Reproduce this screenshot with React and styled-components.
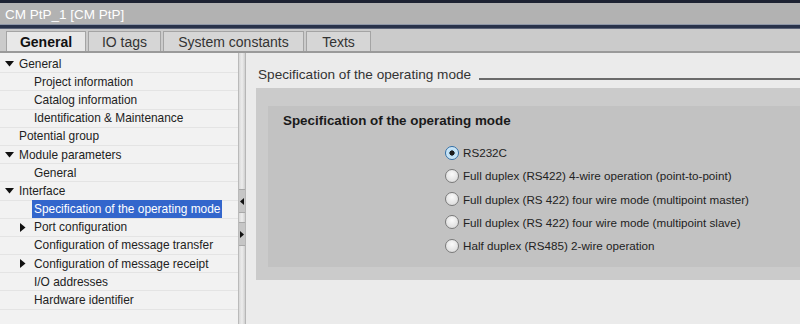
import styled, { createGlobalStyle } from "styled-components";

const GlobalStyle = createGlobalStyle`
  html, body {
    margin: 0;
    padding: 0;
    width: 800px;
    height: 324px;
    overflow: hidden;
    background: #ebebeb;
    font-family: "Liberation Sans", "DejaVu Sans", sans-serif;
  }
`;

const Window = styled.div`
  width: 800px;
  height: 324px;
  display: flex;
  flex-direction: column;
  background: #ebebeb;
`;

const TitleBar = styled.div`
  height: 22px;
  border-top: 3px solid #1d2232;
  border-bottom: 3px solid #28324a;
  box-shadow: inset 0 -1px 0 #8d95a6;
  background: #b2b2b2;
  color: #fff;
  font-size: 13.5px;
  display: flex;
  align-items: center;
  padding-left: 5px;
`;

const TabBar = styled.div`
  height: 22px;
  background: #cbcbcb;
  border-top: 1px solid #5c6478;
  border-bottom: 2px solid #9a9a9a;
  display: flex;
  align-items: flex-end;
  gap: 2px;
  padding-left: 6px;
`;

const Tab = styled.div`
  width: ${(p) => p.$w}px;
  height: 20px;
  box-sizing: border-box;
  display: flex;
  align-items: center;
  justify-content: center;
  font-size: 14px;
  font-weight: ${(p) => (p.$active ? 700 : 400)};
  color: ${(p) => (p.$active ? "#111" : "#333")};
  background: ${(p) => (p.$active ? "#e8e8e8" : "#d6d6d6")};
  border: 1px solid #a4a4a4;
  border-bottom: none;
`;

const Body = styled.div`
  flex: 1;
  display: flex;
  min-height: 0;
`;

const Tree = styled.div`
  width: 238px;
  background: #f2f2f2;
  padding-top: 2px;
`;

const Row = styled.div`
  height: 18.2px;
  box-sizing: border-box;
  border-bottom: 1px solid #e4e4e4;
  display: flex;
  align-items: center;
  padding-left: ${(p) => p.$indent}px;
  font-size: 11.9px;
  color: #222;
`;

const Caret = styled.span`
  width: 14px;
  display: flex;
  align-items: center;
  flex-shrink: 0;
`;

const Label = styled.span`
  padding: 2px 2px;
  margin-left: -2px;
  background: ${(p) => (p.$selected ? "#3366cc" : "transparent")};
  color: ${(p) => (p.$selected ? "#fff" : "#222")};
`;

const Splitter = styled.div`
  width: 8px;
  background: linear-gradient(90deg, #9c9c9c 0, #d8d8d8 1px, #ededed 4px, #d0d0d0 7px, #9c9c9c 8px);
  display: flex;
  flex-direction: column;
  align-items: center;
  padding-top: 136px;
  gap: 9px;
`;

const SplitButton = styled.div`
  width: 6px;
  height: 22px;
  background: #c6c6c6;
  border-top: 1px solid #a8a8a8;
  border-bottom: 1px solid #a8a8a8;
  display: flex;
  align-items: center;
  justify-content: center;
`;

const Content = styled.div`
  flex: 1;
  padding: 12px 0 0 10px;
`;

const SectionHead = styled.div`
  display: flex;
  align-items: center;
  gap: 8px;
  font-size: 13.6px;
  color: #333;
  padding-left: 2px;
  height: 18px;
`;

const HeadRule = styled.div`
  flex: 1;
  height: 2px;
  background: #6a6a6a;
  margin-top: 10px;
`;

const OuterPanel = styled.div`
  margin-top: 5px;
  background: #cbcbcb;
  padding: 18px 0 13px 12px;
`;

const InnerPanel = styled.div`
  background: #c2c2c2;
  padding: 5px 0 0 15px;
  height: 161px;
  box-sizing: border-box;
`;

const PanelTitle = styled.div`
  font-size: 13.4px;
  font-weight: 700;
  color: #1a1a1a;
  height: 18px;
  display: flex;
  align-items: center;
`;

const Options = styled.div`
  display: flex;
  flex-direction: column;
  gap: 9.3px;
  padding: 16.5px 0 0 163px;
`;

const Option = styled.label`
  display: flex;
  align-items: center;
  gap: 4px;
  height: 14px;
  font-size: 11.65px;
  color: #222;
`;

const Radio = styled.span`
  width: 12px;
  height: 12px;
  border-radius: 50%;
  border: 1px solid ${(p) => (p.$checked ? "#2f6fa8" : "#7a7a7a")};
  background: ${(p) =>
    p.$checked
      ? "radial-gradient(circle, #1b1b1b 0 2.3px, #b7dcf4 2.9px, #eaf5fc 100%)"
      : "radial-gradient(circle at 50% 35%, #fafafa, #d6d6d6)"};
  display: inline-block;
  flex-shrink: 0;
  margin-left: -1px;
`;

function CaretIcon({ open }) {
  return open ? (
    <svg width="9" height="6" viewBox="0 0 9 6">
      <path d="M0 0 L9 0 L4.5 5.5 Z" fill="#111" />
    </svg>
  ) : (
    <svg width="6" height="9" viewBox="0 0 6 9">
      <path d="M0 0 L5.5 4.5 L0 9 Z" fill="#111" />
    </svg>
  );
}

const tree = [
  { t: "General", indent: 5, caret: "open" },
  { t: "Project information", indent: 34 },
  { t: "Catalog information", indent: 34 },
  { t: "Identification & Maintenance", indent: 34 },
  { t: "Potential group", indent: 19 },
  { t: "Module parameters", indent: 5, caret: "open" },
  { t: "General", indent: 34 },
  { t: "Interface", indent: 5, caret: "open" },
  { t: "Specification of the operating mode", indent: 34, selected: true },
  { t: "Port configuration", indent: 20, caret: "closed" },
  { t: "Configuration of message transfer", indent: 34 },
  { t: "Configuration of message receipt", indent: 20, caret: "closed" },
  { t: "I/O addresses", indent: 34 },
  { t: "Hardware identifier", indent: 34 },
];

const options = [
  "RS232C",
  "Full duplex (RS422) 4-wire operation (point-to-point)",
  "Full duplex (RS 422) four wire mode (multipoint master)",
  "Full duplex (RS 422) four wire mode (multipoint slave)",
  "Half duplex (RS485) 2-wire operation",
];

export default function App() {
  return (
    <Window>
      <GlobalStyle />
      <TitleBar>CM PtP_1 [CM PtP]</TitleBar>
      <TabBar>
        <Tab $active $w={80}>General</Tab>
        <Tab $w={73}>IO tags</Tab>
        <Tab $w={141}>System constants</Tab>
        <Tab $w={65}>Texts</Tab>
      </TabBar>
      <Body>
        <Tree>
          {tree.map((r, i) => (
            <Row key={i} $indent={r.indent}>
              {r.caret && (
                <Caret>
                  <CaretIcon open={r.caret === "open"} />
                </Caret>
              )}
              <Label $selected={r.selected}>{r.t}</Label>
            </Row>
          ))}
        </Tree>
        <Splitter>
          <SplitButton>
            <svg width="4" height="7" viewBox="0 0 4 7">
              <path d="M4 0 L0 3.5 L4 7 Z" fill="#111" />
            </svg>
          </SplitButton>
          <SplitButton>
            <svg width="4" height="7" viewBox="0 0 4 7">
              <path d="M0 0 L4 3.5 L0 7 Z" fill="#111" />
            </svg>
          </SplitButton>
        </Splitter>
        <Content>
          <SectionHead>
            Specification of the operating mode
            <HeadRule />
          </SectionHead>
          <OuterPanel>
            <InnerPanel>
              <PanelTitle>Specification of the operating mode</PanelTitle>
              <Options>
                {options.map((o, i) => (
                  <Option key={i}>
                    <Radio $checked={i === 0} />
                    {o}
                  </Option>
                ))}
              </Options>
            </InnerPanel>
          </OuterPanel>
        </Content>
      </Body>
    </Window>
  );
}
